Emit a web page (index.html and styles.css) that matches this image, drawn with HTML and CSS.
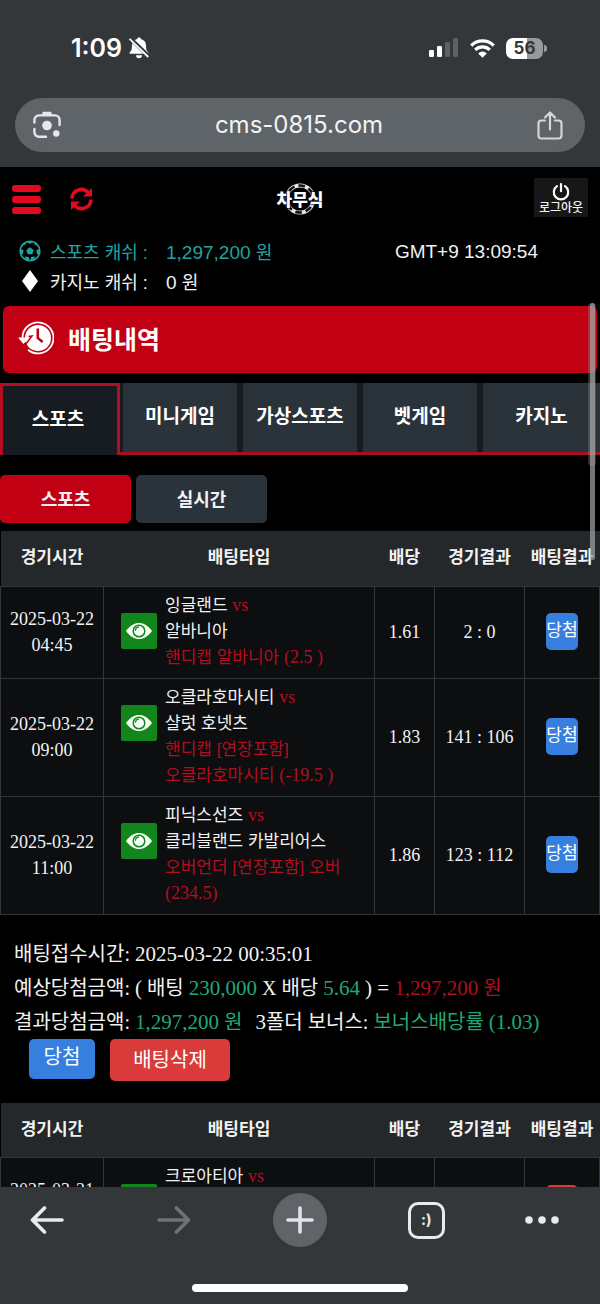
FILE: index.html
```html
<!DOCTYPE html>
<html lang="ko">
<head>
<meta charset="utf-8">
<meta name="viewport" content="width=device-width, initial-scale=1">
<title>배팅내역</title>
<link rel="stylesheet" href="styles.css">
</head>
<body>
<svg class="defs" aria-hidden="true">
  <symbol id="eye" viewBox="0 0 26 16">
    <path d="M0 8C4 2.600 8.400 0 13 0s9 2.600 13 8c-4 5.400-8.400 8-13 8S4 13.400 0 8Z" fill="#f4fff4"/>
    <circle cx="13" cy="8" r="5.800" fill="none" stroke="#12861c" stroke-width="1.500"/>
    <path d="M13 4.200a3.800 3.800 0 0 0-3.600 3.600" fill="none" stroke="#12861c" stroke-width="1.200"/>
  </symbol>
</svg>

<header class="browser-top">
  <div class="status">
    <div class="status-side">
      <span class="clock">1:09</span>
      <svg width="20" height="22" viewBox="0 0 20 22" aria-hidden="true">
        <path d="M10 .500c1.200 0 1.800.700 1.900 1.600 3.200.900 5.100 3.200 5.100 6.200 0 3.900.400 5.400 2.400 7.200v1.300H.600v-1.300C2.600 13.700 3 12.200 3 8.300c0-3 1.900-5.300 5.100-6.200C8.200 1.200 8.800.500 10 .500ZM7 18.300h6a3 3 0 0 1-6 0Z" fill="#fff"/>
        <path d="M1 1.200 20.500 20" stroke="#33373a" stroke-width="4"/>
        <path d="M.500 1.800 19.300 20" stroke="#fff" stroke-width="1.800"/>
      </svg>
    </div>
    <div class="status-side status-icons">
      <svg width="30" height="20" viewBox="0 0 30 20" aria-hidden="true">
        <rect x="0" y="12" width="5" height="7" rx="1.300" fill="#fff"/>
        <rect x="8" y="8" width="5" height="11" rx="1.300" fill="#fff"/>
        <rect x="16" y="4" width="5" height="15" rx="1.300" fill="#5e6164"/>
        <rect x="24" y="0" width="5" height="19" rx="1.300" fill="#5e6164"/>
      </svg>
      <svg width="25" height="19" viewBox="0 0 25 19" aria-hidden="true">
        <path d="M1.200 6.600a16 16 0 0 1 22.600 0M5.200 10.900a10.400 10.400 0 0 1 14.600 0" fill="none" stroke="#fff" stroke-width="3.200"/>
        <path d="M12.500 18.700 8.200 14.400a6 6 0 0 1 8.600 0Z" fill="#fff"/>
      </svg>
      <span class="battery"><span class="battery-level">56</span></span>
    </div>
  </div>
  <div class="address">
    <button class="plain" aria-label="렌즈">
      <svg width="28" height="28" viewBox="0 0 28 28" fill="none" stroke="#e4e8ee" stroke-width="2.400" stroke-linecap="round" aria-hidden="true">
        <path d="M1.400 11.500V9a4.600 4.600 0 0 1 4.600-4.600h16A4.600 4.600 0 0 1 26.600 9v5M1.400 18v3A4.600 4.600 0 0 0 6 25.800h7"/>
        <path d="M8.500 4 10 .800h8L19.500 4Z" fill="#e4e8ee" stroke="none"/>
        <circle cx="14" cy="14.500" r="4.800" fill="#e4e8ee" stroke="none"/>
        <circle cx="23.300" cy="22.500" r="3.200" fill="#e4e8ee" stroke="none"/>
      </svg>
    </button>
    <span class="url">cms-0815.com</span>
    <button class="plain" aria-label="공유">
      <svg width="26" height="29" viewBox="0 0 26 29" fill="none" stroke="#d3d5d8" stroke-width="2.200" stroke-linecap="round" stroke-linejoin="round" aria-hidden="true">
        <path d="M8 9.500H4.500a3 3 0 0 0-3 3v12a3 3 0 0 0 3 3h17a3 3 0 0 0 3-3v-12a3 3 0 0 0-3-3H18M13 18.500V1.800M8 6.500l5-5 5 5"/>
      </svg>
    </button>
  </div>
</header>

<main class="page">
  <div class="scroll-wide"></div>
  <div class="scroll-thin"></div>

  <div class="site-head">
    <div class="site-left">
      <button class="plain" aria-label="메뉴">
        <svg width="29" height="29" viewBox="0 0 29 29" fill="#e20a20" aria-hidden="true">
          <rect y="0" width="29" height="7" rx="3"/><rect y="11" width="29" height="7" rx="3"/><rect y="22" width="29" height="7" rx="3"/>
        </svg>
      </button>
      <button class="plain" aria-label="새로고침">
        <svg width="23" height="24" viewBox="0 0 23 24" aria-hidden="true">
          <path d="M2 11.500A9.200 9.200 0 0 1 18 5.500M21 12.500A9.200 9.200 0 0 1 5 18.500" fill="none" stroke="#e20a20" stroke-width="3.600"/>
          <path d="M22 1v8.500h-9ZM1 23v-8.500h9Z" fill="#e20a20"/>
        </svg>
      </button>
    </div>
    <a class="logo" href="#">
      <svg class="logo-ring" width="32" height="32" viewBox="0 0 32 32" fill="none" aria-hidden="true">
        <circle cx="16" cy="16" r="13.500" stroke="#e8e8e8" stroke-width="4"/>
        <circle cx="16" cy="16" r="13.500" stroke="#111" stroke-width="2.600" stroke-dasharray="6.600 4" stroke-dashoffset="2"/>
      </svg>
      <span class="logo-name">차무식</span>
    </a>
    <button class="logout">
      <svg width="18" height="18" viewBox="0 0 18 18" fill="none" stroke="#fff" stroke-width="2.200" stroke-linecap="round" aria-hidden="true">
        <path d="M5 3.200a7.200 7.200 0 1 0 8 0M9 1.200v7"/>
      </svg>
      로그아웃
    </button>
  </div>

  <div class="wallet">
    <div class="cash sports">
      <svg width="22" height="22" viewBox="0 0 22 22" aria-hidden="true">
        <circle cx="11" cy="11" r="9.800" fill="none" stroke="#20a3a1" stroke-width="1.600"/>
        <path d="m11 7.200 3.700 2.700-1.400 4.300H8.700L7.300 9.900ZM7.500 1.700 11 4l3.500-2.300ZM1.200 9l3.300 1L4 14l-2 .5ZM20.800 9l-3.300 1 .5 4 2 .5ZM6 16.500l3.800.6 1 3.700-4.200-1.200ZM16 16.500l-3.800.6-1 3.700 4.200-1.200ZM3 5.500l3-.5.800-3ZM19 5.500l-3-.5-.8-3Z" fill="#20a3a1"/>
      </svg>
      <span class="cash-name">스포츠 캐쉬 :</span>
      <span class="cash-value">1,297,200 <span class="won">원</span></span>
    </div>
    <div class="cash">
      <svg width="22" height="22" viewBox="0 0 22 22" aria-hidden="true"><path d="m11 0 8 11-8 11L3 11Z" fill="#fff"/></svg>
      <span class="cash-name">카지노 캐쉬 :</span>
      <span class="cash-value">0 <span class="won">원</span></span>
    </div>
    <time class="gmt">GMT+9 13:09:54</time>
  </div>

  <h1 class="banner">
    <svg width="36" height="34" viewBox="0 0 36 34" aria-hidden="true">
      <path d="M4.500 17A15.500 15.500 0 1 1 10 28.700" fill="none" stroke="#fff" stroke-width="1.800"/>
      <circle cx="20" cy="17" r="13" fill="#fff"/>
      <path d="M0 16.500h11L5.500 23Z" fill="#fff"/>
      <path d="M10.500 15.500 14 15l-6.500 8.500" fill="none" stroke="#c10014" stroke-width="1.500"/>
      <path d="M19.800 7.500V17l4.800 4" fill="none" stroke="#c10014" stroke-width="2.600"/>
    </svg>
    배팅내역
  </h1>

  <nav class="tabs">
    <button class="tab active">스포츠</button>
    <button class="tab">미니게임</button>
    <button class="tab">가상스포츠</button>
    <button class="tab">벳게임</button>
    <button class="tab">카지노</button>
  </nav>

  <div class="filters">
    <button class="filter active">스포츠</button>
    <button class="filter">실시간</button>
  </div>

  <table class="bets">
    <colgroup><col class="c-time"><col><col class="c-odds"><col class="c-score"><col class="c-result"></colgroup>
    <thead><tr><th>경기시간</th><th>배팅타입</th><th>배당</th><th>경기결과</th><th>배팅결과</th></tr></thead>
    <tbody>
      <tr>
        <td class="num">2025-03-22<br>04:45</td>
        <td><div class="match"><button class="view" aria-label="보기"><svg width="26" height="16" aria-hidden="true"><use href="#eye"/></svg></button>
          <div>잉글랜드 <span class="red num">vs</span><br>알바니아<br><span class="red">핸디캡 알바니아 <span class="num">(2.5 )</span></span></div></div></td>
        <td class="num">1.61</td><td class="num">2 : 0</td><td><span class="badge">당첨</span></td>
      </tr>
      <tr>
        <td class="num">2025-03-22<br>09:00</td>
        <td><div class="match"><button class="view" aria-label="보기"><svg width="26" height="16" aria-hidden="true"><use href="#eye"/></svg></button>
          <div>오클라호마시티 <span class="red num">vs</span><br>샬럿 호넷츠<br><span class="red">핸디캡 [연장포함]<br>오클라호마시티 <span class="num">(-19.5 )</span></span></div></div></td>
        <td class="num">1.83</td><td class="num">141 : 106</td><td><span class="badge">당첨</span></td>
      </tr>
      <tr>
        <td class="num">2025-03-22<br>11:00</td>
        <td><div class="match"><button class="view" aria-label="보기"><svg width="26" height="16" aria-hidden="true"><use href="#eye"/></svg></button>
          <div>피닉스선즈 <span class="red num">vs</span><br>클리블랜드 카발리어스<br><span class="red">오버언더 [연장포함] 오버<br><span class="num">(234.5)</span></span></div></div></td>
        <td class="num">1.86</td><td class="num">123 : 112</td><td><span class="badge">당첨</span></td>
      </tr>
    </tbody>
  </table>

  <section class="summary">
    <p>배팅접수시간: <span class="num">2025-03-22 00:35:01</span></p>
    <p>예상당첨금액: <span class="num">(</span> 배팅 <span class="num green">230,000</span> X 배당 <span class="num green">5.64</span> <span class="num">) =</span> <span class="red"><span class="num">1,297,200</span> 원</span></p>
    <p>결과당첨금액: <span class="green"><span class="num">1,297,200</span> 원</span> <span class="bonus"><span class="num">3</span>폴더 보너스: <span class="green">보너스배당률 <span class="num">(1.03)</span></span></span></p>
    <div class="actions">
      <span class="state">당첨</span>
      <button class="remove">배팅삭제</button>
    </div>
  </section>

  <table class="bets">
    <colgroup><col class="c-time"><col><col class="c-odds"><col class="c-score"><col class="c-result"></colgroup>
    <thead><tr><th>경기시간</th><th>배팅타입</th><th>배당</th><th>경기결과</th><th>배팅결과</th></tr></thead>
    <tbody>
      <tr>
        <td class="num">2025-03-21<br>&nbsp;</td>
        <td><div class="match"><button class="view" aria-label="보기"><svg width="26" height="16" aria-hidden="true"><use href="#eye"/></svg></button>
          <div>크로아티아 <span class="red num">vs</span><br>&nbsp;<br>&nbsp;</div></div></td>
        <td></td><td></td><td><span class="badge lost"></span></td>
      </tr>
    </tbody>
  </table>
</main>

<footer class="browser-bottom">
  <div class="tools">
    <button class="plain" aria-label="뒤로"><svg width="34" height="28" viewBox="0 0 34 28" fill="none" stroke="#e8eaed" stroke-width="3.600" stroke-linecap="round" stroke-linejoin="round" aria-hidden="true"><path d="M32 14H2.500M14.500 2l-12 12 12 12"/></svg></button>
    <button class="plain" aria-label="앞으로"><svg width="34" height="28" viewBox="0 0 34 28" fill="none" stroke="#707376" stroke-width="3.600" stroke-linecap="round" stroke-linejoin="round" aria-hidden="true"><path d="M2 14h29.500M19.500 2l12 12-12 12"/></svg></button>
    <button class="plain new-tab" aria-label="새 탭"><svg width="28" height="28" viewBox="0 0 28 28" stroke="#e4e1e8" stroke-width="3.600" stroke-linecap="round" aria-hidden="true"><path d="M14 2v24M2 14h24"/></svg></button>
    <button class="plain tab-count" aria-label="탭 목록">:)</button>
    <button class="plain more" aria-label="더보기"><svg width="34" height="8" viewBox="0 0 34 8" fill="#e8eaed" aria-hidden="true"><circle cx="4" cy="4" r="3.800"/><circle cx="17" cy="4" r="3.800"/><circle cx="30" cy="4" r="3.800"/></svg></button>
  </div>
  <div class="home-bar"></div>
</footer>
</body>
</html>
```

FILE: styles.css
```css
* { box-sizing: border-box; }

body {
  margin: 0;
  height: 100vh;
  display: flex;
  flex-direction: column;
  overflow: hidden;
  background: #000;
  color: #f2f2f2;
  font-family: "Liberation Sans", "Noto Sans CJK KR", sans-serif;
}

button { font-family: inherit; color: inherit; border: 0; padding: 0; }
svg { display: block; flex: none; }
.defs { position: absolute; width: 0; height: 0; }
.plain { background: none; display: flex; align-items: center; justify-content: center; }

/* Browser bar */
.browser-top { flex: none; background: #33373a; padding: 32px 15px 15px; }
.status {
  display: flex;
  justify-content: space-between;
  align-items: center;
  height: 32px;
  padding: 0 38px 0 56px;
}
.status-side { display: flex; align-items: center; gap: 7px; }
.status-icons { gap: 11px; }
.clock { font: 600 25px/32px Inter, sans-serif; color: #fff; }
.battery { position: relative; display: block; margin-right: 4px; }
.battery::after {
  content: "";
  position: absolute;
  right: -4px;
  top: 7px;
  width: 3px;
  height: 7px;
  border-radius: 0 3px 3px 0;
  background: #97999b;
}
.battery-level {
  display: block;
  width: 37px;
  border-radius: 7px;
  background: linear-gradient(90deg, #fff 56%, #97999b 56%);
  color: #33373a;
  font: 700 17px/21px Inter, sans-serif;
  text-align: center;
}
.address {
  display: flex;
  align-items: center;
  justify-content: space-between;
  margin-top: 34px;
  height: 54px;
  padding: 0 22px 0 18px;
  border-radius: 27px;
  background: #5f6468;
}
.url { font: 400 24px/32px Inter, sans-serif; color: #f1f3f4; }

/* Site */
.page { position: relative; flex: 1; min-height: 0; overflow: hidden; }
.scroll-wide, .scroll-thin { position: absolute; z-index: 2; top: 136px; border-radius: 4px; }
.scroll-wide { right: 4px; width: 8px; height: 163px; background: rgba(150, 150, 150, .3); }
.scroll-thin { right: 5px; width: 5px; height: 257px; background: rgba(165, 165, 165, .7); }

.site-head {
  display: grid;
  grid-template-columns: 1fr auto 1fr;
  align-items: center;
  padding: 11px 12px 0;
}
.site-left { display: flex; align-items: center; gap: 29px; padding-top: 3px; }
.logo { position: relative; padding-top: 2px; color: #fff; text-decoration: none; }
.logo-ring { position: absolute; left: 50%; top: 50%; margin: -15px 0 0 -16px; }
.logo-name {
  position: relative;
  font: 900 17px/22px "Noto Sans CJK KR", sans-serif;
  text-shadow: 0 0 2px #000, 0 0 2px #000, 0 0 2px #000;
}
.logout {
  justify-self: end;
  display: flex;
  flex-direction: column;
  align-items: center;
  width: 54px;
  padding: 5px 0 2px;
  background: #171717;
  font-size: 12px;
  font-weight: 500;
  line-height: 14px;
}

.wallet { position: relative; padding: 19px 20px 0 19px; }
.cash { display: flex; align-items: center; height: 30px; gap: 9px; font-size: 18px; }
.cash-name { width: 107px; }
.cash-value { font-size: 19px; }
.won { font-size: 18px; }
.sports { color: #20a3a1; }
.gmt { position: absolute; right: 62px; top: 20px; font-size: 19px; line-height: 30px; }

.banner {
  display: flex;
  align-items: center;
  gap: 14px;
  height: 67px;
  margin: 10px 3px;
  padding: 0 15px 4px;
  border-radius: 6px;
  background: #c10014;
  color: #fff;
  font-size: 25px;
}

.tabs {
  display: grid;
  grid-template-columns: repeat(5, 1fr);
  background: #171b22;
  border-bottom: 3px solid #a8101f;
}
.tab {
  height: 69px;
  padding-bottom: 6px;
  border: solid #171b22;
  border-width: 0 3px;
  background: #2b333a;
  color: #fff;
  font-size: 19px;
  font-weight: 700;
  white-space: nowrap;
}
.tab:last-child { border-right: 0; }
.tab.active {
  height: 72px;
  margin-bottom: -3px;
  padding: 0 4px 6px 0;
  border: 3px solid #b40f20;
  border-bottom: 0;
  background: #171b22;
}

.filters { display: flex; gap: 5px; padding: 20px 0 8px; }
.filter {
  width: 131px;
  height: 48px;
  padding-bottom: 3px;
  border-radius: 5px;
  background: #2b333a;
  font-size: 18px;
  font-weight: 700;
}
.filter.active { background: #c10014; }

.bets { width: 100%; table-layout: fixed; border-collapse: collapse; font-size: 17px; line-height: 26px; }
.c-time { width: 103px; }
.c-odds { width: 60px; }
.c-score { width: 90px; }
.c-result { width: 75px; }
.bets th { height: 55px; padding: 0; background: #24282a; white-space: nowrap; }
.bets td {
  padding: 6px 0 7px;
  border: 1px solid #30363c;
  background: #0d0e10;
  text-align: center;
}
.num { font-family: "Liberation Serif", serif; }
.bets .num { font-size: 18px; line-height: 26px; }
.bets div .num { line-height: 1; }
.match { display: flex; align-items: flex-start; gap: 8px; padding-left: 17px; text-align: left; white-space: nowrap; }
.view {
  display: flex;
  align-items: center;
  justify-content: center;
  width: 36px;
  height: 36px;
  margin-top: 20px;
  border-radius: 2px;
  background: #12861c;
}
.red { color: #b30d1f; }
.green { color: #20a878; }
.badge {
  display: inline-block;
  width: 32px;
  height: 37px;
  border-radius: 5px;
  background: #367fdf;
  color: #fff;
  line-height: 36px;
  white-space: nowrap;
  vertical-align: middle;
}
.lost { background: #d93a3a; }

.summary {
  padding: 22px 14px;
  font-family: "Liberation Serif", "Noto Sans CJK KR", serif;
  font-size: 20px;
  line-height: 34px;
}
.summary p { margin: 0; height: 34px; white-space: nowrap; }
.summary .num { font-size: 21px; line-height: 1; }
.bonus { margin-left: 8px; }
.actions { display: flex; align-items: flex-start; gap: 15px; padding-left: 15px; }
.state, .remove { border-radius: 5px; color: #fff; font-size: 20px; text-align: center; }
.state { width: 66px; height: 40px; line-height: 37px; background: #367fdf; }
.remove { width: 120px; height: 42px; padding-bottom: 3px; background: #d93a3a; }

/* Browser toolbar */
.browser-bottom { flex: none; background: #33373a; padding: 6px 0 12px; }
.tools {
  display: grid;
  grid-template-columns: repeat(5, 1fr);
  align-items: center;
  justify-items: center;
  height: 54px;
  margin: 0 -16px;
}
.new-tab { width: 54px; height: 54px; border-radius: 50%; background: #5f6468; }
.more { padding-right: 22px; }
.tools .tab-count {
  width: 37px;
  height: 37px;
  border: 3px solid #e8eaed;
  border-radius: 10px;
  color: #e8eaed;
  font: 700 15px/20px Inter, sans-serif;
}
.home-bar { width: 36%; height: 8px; margin: 37px auto 0; border-radius: 4px; background: #fff; }
```
